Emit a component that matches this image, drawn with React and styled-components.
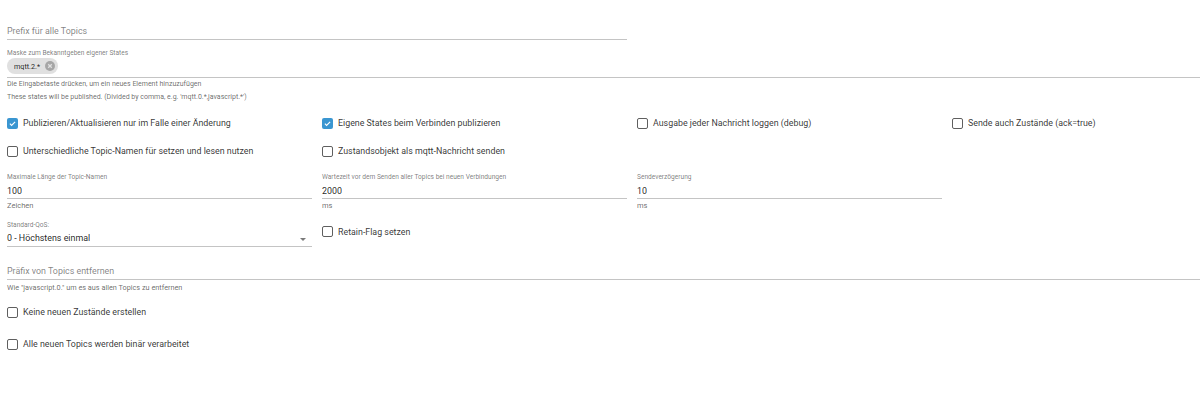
import React from "react";
import styled, { createGlobalStyle } from "styled-components";

const GlobalStyle = createGlobalStyle`
  body {
    margin: 0;
    background: #ffffff;
    font-family: Roboto, "Liberation Sans", sans-serif;
    color: rgba(0, 0, 0, 0.87);
  }
`;

const Page = styled.div`
  width: 1200px;
  height: 411px;
  padding: 22px 0 0 7px;
  box-sizing: border-box;
  overflow: hidden;
`;

const Field = styled.div`
  width: ${(p) => p.$width || "100%"};
  margin-top: ${(p) => p.$top || 0}px;
`;

const Label = styled.div`
  font-size: 6.6px;
  line-height: 10px;
  margin-bottom: ${(p) => p.$gap || 0}px;
  color: rgba(0, 0, 0, 0.54);
  white-space: nowrap;
`;

const InputLine = styled.div`
  display: flex;
  align-items: center;
  height: ${(p) => p.$h || 14}px;
  border-bottom: 1px solid #c4c4c4;
  font-size: 8.9px;
  color: ${(p) => (p.$placeholder ? "rgba(0,0,0,0.5)" : "rgba(0,0,0,0.87)")};
`;

const Helper = styled.div`
  font-size: ${(p) => p.$size || 7}px;
  line-height: ${(p) => p.$lh || 10}px;
  color: rgba(0, 0, 0, 0.6);
  margin-top: ${(p) => p.$top || 0}px;
  white-space: nowrap;
`;

const ChipArea = styled.div`
  display: flex;
  align-items: flex-start;
  padding: 0 0 3px;
  border-bottom: 1px solid #c4c4c4;
`;

const Chip = styled.div`
  display: inline-flex;
  align-items: center;
  height: 16px;
  padding: 0 3px 0 7px;
  border-radius: 8px;
  background: #e0e0e0;
  font-size: 7.2px;
  color: rgba(0, 0, 0, 0.87);
  gap: 5px;
`;

const ChipDelete = styled.span`
  display: inline-flex;
  width: 10px;
  height: 10px;
  svg {
    display: block;
  }
`;

const Grid = styled.div`
  display: grid;
  grid-template-columns: repeat(4, 315px);
  grid-auto-rows: ${(p) => p.$row || 28}px;
  margin-top: ${(p) => p.$top || 0}px;
`;

const FieldGrid = styled.div`
  display: grid;
  grid-template-columns: repeat(4, 315px);
  margin-top: ${(p) => p.$top || 0}px;
  align-items: ${(p) => p.$align || "start"};
`;

const CheckRow = styled.label`
  display: flex;
  align-items: center;
  gap: 5px;
  font-size: 8.85px;
  color: rgba(0, 0, 0, 0.8);
  white-space: nowrap;
`;

const Box = styled.span`
  flex: none;
  width: 11px;
  height: 11px;
  box-sizing: border-box;
  border-radius: 2px;
  border: ${(p) => (p.$checked ? "none" : "1.4px solid #5f5f5f")};
  background: ${(p) => (p.$checked ? "#3a96d1" : "transparent")};
  display: flex;
  align-items: center;
  justify-content: center;
`;

const SelectLine = styled(InputLine)`
  justify-content: space-between;
  padding-right: 6px;
`;

const Arrow = styled.span`
  width: 0;
  height: 0;
  border-left: 3px solid transparent;
  border-right: 3px solid transparent;
  border-top: 3px solid #7a7a7a;
  margin-top: 2px;
`;

const Cell = styled.div`
  width: 305px;
`;

const RetainCell = styled.div`
  padding-bottom: 4px;
`;

function Checkbox({ checked, children }) {
  return (
    <CheckRow>
      <Box $checked={checked}>
        {checked && (
          <svg width="9" height="9" viewBox="0 0 24 24">
            <path d="M5 12.5l4.5 4.5L19 7.5" fill="none" stroke="#fff" strokeWidth="3" />
          </svg>
        )}
      </Box>
      {children}
    </CheckRow>
  );
}

function NumberField({ label, value, unit }) {
  return (
    <Cell>
      <Label $gap={2}>{label}</Label>
      <InputLine>{value}</InputLine>
      <Helper $top={2} $size={7.5}>{unit}</Helper>
    </Cell>
  );
}

export default function App() {
  return (
    <>
      <GlobalStyle />
      <Page>
        <Field $width="620px">
          <InputLine $h={17} $placeholder>Prefix für alle Topics</InputLine>
        </Field>

        <Field $top={8}>
          <Label>Maske zum Bekanntgeben eigener States</Label>
          <ChipArea>
            <Chip>
              mqtt.2.*
              <ChipDelete>
                <svg width="10" height="10" viewBox="0 0 10 10">
                  <circle cx="5" cy="5" r="5" fill="#a6a6a6" />
                  <path d="M3.2 3.2l3.6 3.6M6.8 3.2l-3.6 3.6" stroke="#e0e0e0" strokeWidth="1.3" />
                </svg>
              </ChipDelete>
            </Chip>
          </ChipArea>
          <Helper $lh={13}>Die Eingabetaste drücken, um ein neues Element hinzuzufügen</Helper>
          <Helper $lh={13}>These states will be published. (Divided by comma, e.g. 'mqtt.0.*,javascript.*')</Helper>
        </Field>

        <Grid $top={5}>
          <Checkbox checked>Publizieren/Aktualisieren nur im Falle einer Änderung</Checkbox>
          <Checkbox checked>Eigene States beim Verbinden publizieren</Checkbox>
          <Checkbox>Ausgabe jeder Nachricht loggen (debug)</Checkbox>
          <Checkbox>Sende auch Zustände (ack=true)</Checkbox>
          <Checkbox>Unterschiedliche Topic-Namen für setzen und lesen nutzen</Checkbox>
          <Checkbox>Zustandsobjekt als mqtt-Nachricht senden</Checkbox>
        </Grid>

        <FieldGrid $top={7}>
          <NumberField label="Maximale Länge der Topic-Namen" value="100" unit="Zeichen" />
          <NumberField label="Wartezeit vor dem Senden aller Topics bei neuen Verbindungen" value="2000" unit="ms" />
          <NumberField label="Sendeverzögerung" value="10" unit="ms" />
        </FieldGrid>

        <FieldGrid $top={9} $align="center">
          <Cell>
            <Label>Standard-QoS:</Label>
            <SelectLine $h={16}>
              0 - Höchstens einmal
              <Arrow />
            </SelectLine>
          </Cell>
          <RetainCell>
            <Checkbox>Retain-Flag setzen</Checkbox>
          </RetainCell>
        </FieldGrid>

        <Field $top={16}>
          <InputLine $h={16} $placeholder>Präfix von Topics entfernen</InputLine>
          <Helper $top={3} $size={7.3}>Wie "javascript.0." um es aus allen Topics zu entfernen</Helper>
        </Field>

        <Grid $row={32} $top={3}>
          <Checkbox>Keine neuen Zustände erstellen</Checkbox>
          <div />
          <div />
          <div />
          <Checkbox>Alle neuen Topics werden binär verarbeitet</Checkbox>
        </Grid>
      </Page>
    </>
  );
}
